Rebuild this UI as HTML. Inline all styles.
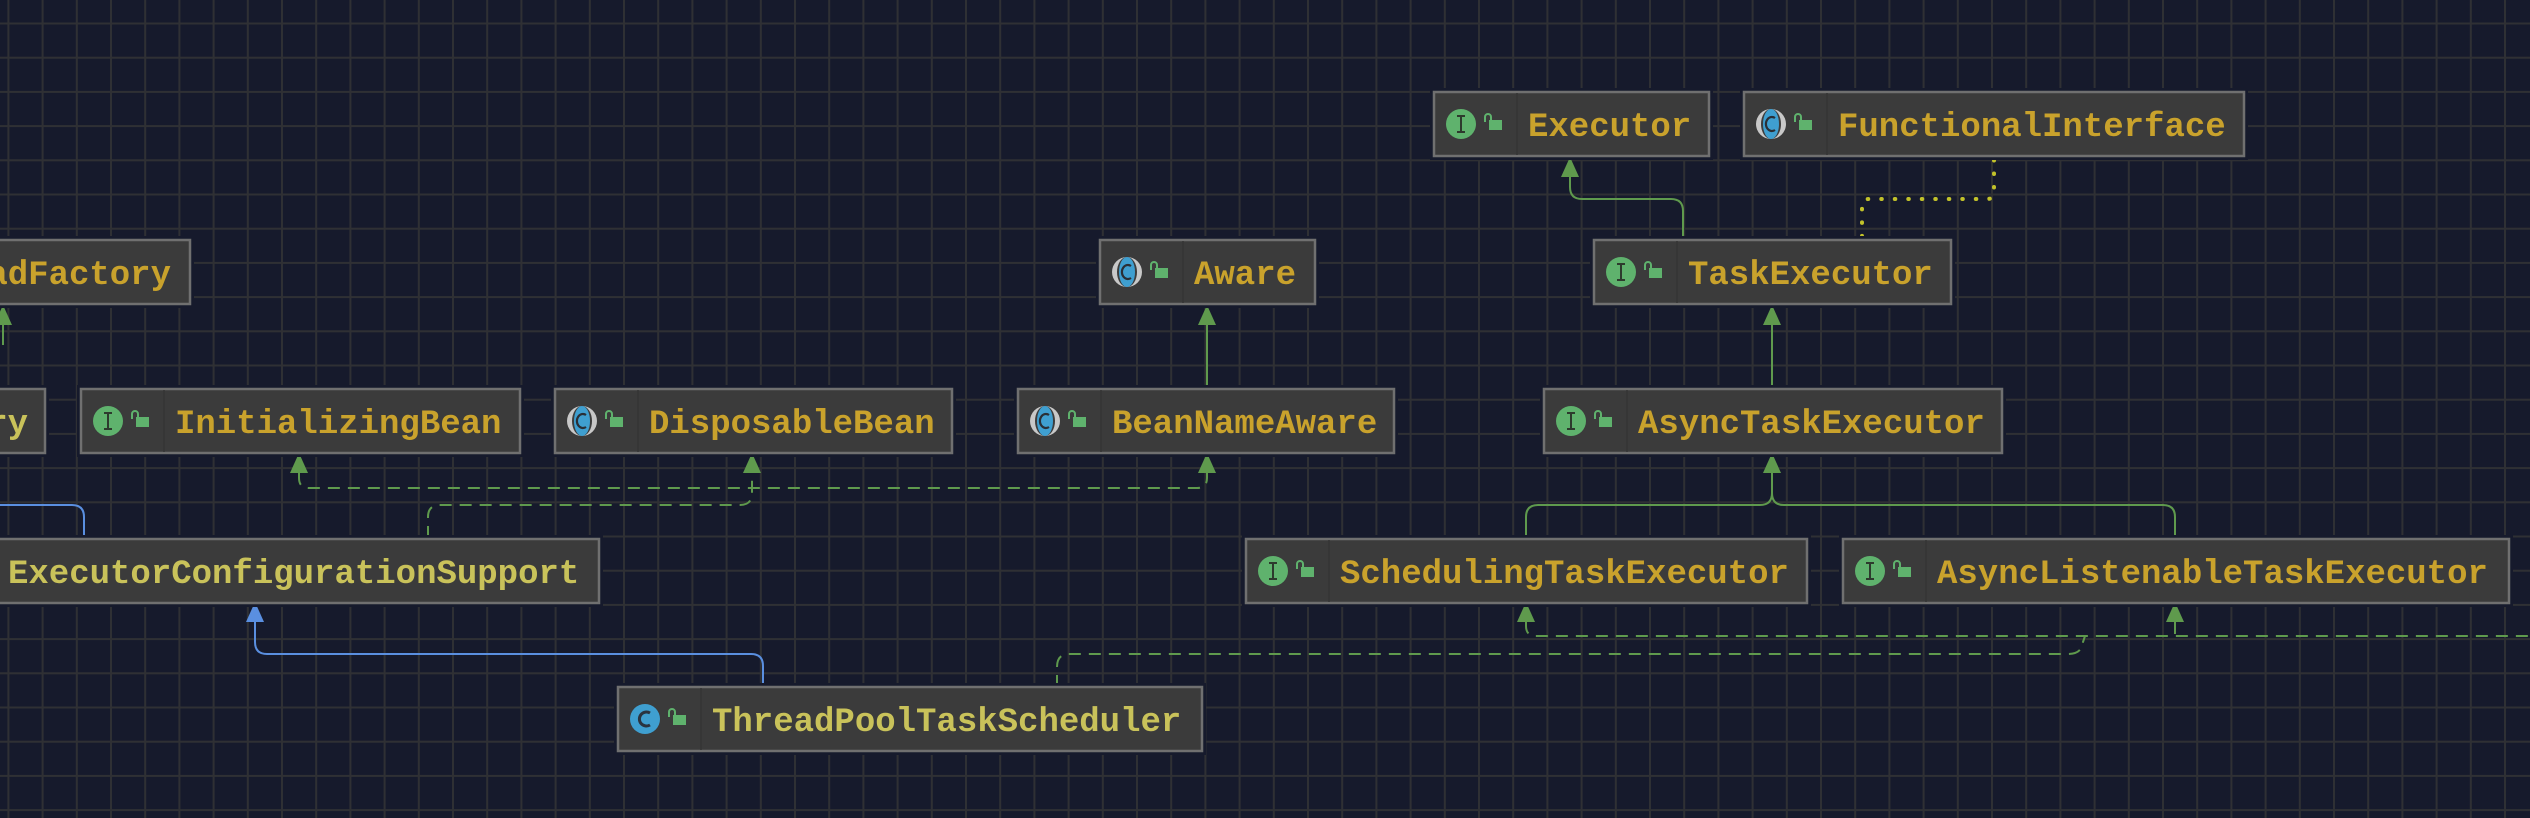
<!DOCTYPE html>
<html><head><meta charset="utf-8"><style>
html,body{margin:0;padding:0;background:#161a2c;overflow:hidden}
svg{display:block}
text{font-family:"Liberation Mono",monospace;font-weight:bold;font-size:34px}
</style></head><body>
<svg width="2530" height="818" viewBox="0 0 2530 818" xmlns="http://www.w3.org/2000/svg">
<defs>
<pattern id="g" x="7.4" y="22.5" width="34.2" height="34.2" patternUnits="userSpaceOnUse">
<rect x="0" y="0" width="2" height="34.2" fill="#2f3034"/>
<rect x="0" y="0" width="34.2" height="2" fill="#2f3034"/>
</pattern>
<g id="lock"><path d="M51,30 V25 A3,3 0 0 1 57,25 V28" fill="none" stroke="#5fb26d" stroke-width="2"/><rect x="55" y="28" width="13" height="10" fill="#5fb26d"/></g>
<g id="ico-i"><circle cx="27" cy="32" r="15" fill="#5fb26d"/><path d="M23,24 H31 M27,24 V40 M23,40 H31" stroke="#2d3a2d" stroke-width="2" fill="none"/></g>
<g id="ico-a"><circle cx="27" cy="32" r="15" fill="#c8c8c8"/><ellipse cx="27" cy="32" rx="10" ry="15" fill="#3d3d3d"/><ellipse cx="27" cy="32" rx="8" ry="15" fill="#3f9fd0"/><path d="M31,26 A6,7 0 1 0 31,38" stroke="#2a2f36" stroke-width="2.2" fill="none"/></g>
<g id="ico-c"><circle cx="27" cy="32" r="15" fill="#3f9fd0"/><path d="M32,26 A7,7 0 1 0 32,38" stroke="#2a3440" stroke-width="3" fill="none"/></g>
</defs>
<rect width="2530" height="818" fill="#161a2c"/>
<rect width="2530" height="818" fill="url(#g)"/>

<g fill="none" stroke-width="2">
<path d="M3,325 V345" stroke="#5f9a4d"/>
<path d="M84,538 V517 Q84,505 72,505 H-10" stroke="#5a8fe0"/>
<path d="M763,688 V666 Q763,654 751,654 H267 Q255,654 255,642 V620" stroke="#5a8fe0"/>
<g stroke="#5f9a4d" stroke-dasharray="12 8">
<path d="M428,538 V517 Q428,505 440,505 H740 Q752,505 752,493 V473"/>
<path d="M299,473 V478 Q299,488 309,488 H1197 Q1207,488 1207,478 V473"/>
<path d="M1057,687 V667 Q1057,654 1069,654 H2068 Q2082,654 2083,642 L2085,636"/>
<path d="M1526,622 V626 Q1526,636 1536,636 H2530"/>
<path d="M2175,622 V636"/>
</g>
<g stroke="#5f9a4d">
<path d="M1207,389 V325"/>
<path d="M1683,240 V211 Q1683,199 1671,199 H1582 Q1570,199 1570,187 V177"/>
<path d="M1772,389 V325"/>
<path d="M1526,538 V517 Q1526,505 1538,505 H1760 Q1772,505 1772,493 V473"/>
<path d="M2175,538 V517 Q2175,505 2163,505 H1784 Q1772,505 1772,493"/>
</g>
<path d="M1994,160 V192 Q1994,199 1987,199 H1869 Q1862,199 1862,206 V236" stroke="#c2c22a" stroke-width="4" stroke-linecap="round" stroke-dasharray="0.5 13"/>
</g>
<g fill="#5f9a4d">
<path d="M3,305 L-6,325 L12,325Z"/>
<path d="M299,453 L290,473 L308,473Z"/>
<path d="M752,453 L743,473 L761,473Z"/>
<path d="M1207,453 L1198,473 L1216,473Z"/>
<path d="M1207,305 L1198,325 L1216,325Z"/>
<path d="M1570,157 L1561,177 L1579,177Z"/>
<path d="M1772,305 L1763,325 L1781,325Z"/>
<path d="M1772,453 L1763,473 L1781,473Z"/>
<path d="M1526,602 L1517,622 L1535,622Z"/>
<path d="M2175,602 L2166,622 L2184,622Z"/>
</g>
<path d="M255,602 L246,622 L264,622Z" fill="#5a8fe0"/>

<g stroke="#161a2c" stroke-width="8" fill="none">
<rect x="-100" y="240" width="290" height="64"/><rect x="-100" y="389" width="145" height="64"/>
<rect x="81" y="389" width="439" height="64"/><rect x="555" y="389" width="397" height="64"/>
<rect x="1018" y="389" width="376" height="64"/><rect x="1100" y="240" width="215" height="64"/>
<rect x="1434" y="92" width="275" height="64"/><rect x="1744" y="92" width="500" height="64"/>
<rect x="1594" y="240" width="357" height="64"/><rect x="1544" y="389" width="458" height="64"/>
<rect x="-100" y="539" width="699" height="64"/><rect x="1246" y="539" width="561" height="64"/>
<rect x="1843" y="539" width="666" height="64"/><rect x="618" y="687" width="584" height="64"/>
</g>
<g fill="#3b3b3b" stroke="#707070" stroke-width="2.5">
<rect x="-100" y="240" width="290" height="64"/><rect x="-100" y="389" width="145" height="64"/>
<rect x="81" y="389" width="439" height="64"/><rect x="555" y="389" width="397" height="64"/>
<rect x="1018" y="389" width="376" height="64"/><rect x="1100" y="240" width="215" height="64"/>
<rect x="1434" y="92" width="275" height="64"/><rect x="1744" y="92" width="500" height="64"/>
<rect x="1594" y="240" width="357" height="64"/><rect x="1544" y="389" width="458" height="64"/>
<rect x="-100" y="539" width="699" height="64"/><rect x="1246" y="539" width="561" height="64"/>
<rect x="1843" y="539" width="666" height="64"/><rect x="618" y="687" width="584" height="64"/>
</g>
<g stroke="#353535" stroke-width="1.5">
<path d="M164,390 V452 M638,390 V452 M1101,390 V452 M1183,241 V303 M1517,93 V155 M1827,93 V155 M1677,241 V303 M1627,390 V452 M1329,540 V602 M1926,540 V602 M701,688 V750"/>
</g>
<g transform="translate(81,389)"><use href="#ico-i"/><use href="#lock"/></g>
<g transform="translate(555,389)"><use href="#ico-a"/><use href="#lock"/></g>
<g transform="translate(1018,389)"><use href="#ico-a"/><use href="#lock"/></g>
<g transform="translate(1100,240)"><use href="#ico-a"/><use href="#lock"/></g>
<g transform="translate(1434,92)"><use href="#ico-i"/><use href="#lock"/></g>
<g transform="translate(1744,92)"><use href="#ico-a"/><use href="#lock"/></g>
<g transform="translate(1594,240)"><use href="#ico-i"/><use href="#lock"/></g>
<g transform="translate(1544,389)"><use href="#ico-i"/><use href="#lock"/></g>
<g transform="translate(1246,539)"><use href="#ico-i"/><use href="#lock"/></g>
<g transform="translate(1843,539)"><use href="#ico-i"/><use href="#lock"/></g>
<g transform="translate(618,687)"><use href="#ico-c"/><use href="#lock"/></g>

<g fill="#c9a22c">
<text x="171" y="284" text-anchor="end">ThreadFactory</text>
<text x="175" y="433">InitializingBean</text>
<text x="649" y="433">DisposableBean</text>
<text x="1112" y="433">BeanNameAware</text>
<text x="1194" y="284">Aware</text>
<text x="1528" y="136">Executor</text>
<text x="1838" y="136">FunctionalInterface</text>
<text x="1688" y="284">TaskExecutor</text>
<text x="1638" y="433">AsyncTaskExecutor</text>
<text x="1340" y="583">SchedulingTaskExecutor</text>
<text x="1937" y="583">AsyncListenableTaskExecutor</text>
</g>
<g fill="#c9c25a">
<text x="28" y="433" text-anchor="end">ry</text>
<text x="8" y="583">ExecutorConfigurationSupport</text>
<text x="712" y="731">ThreadPoolTaskScheduler</text>
</g>
</svg>
</body></html>
